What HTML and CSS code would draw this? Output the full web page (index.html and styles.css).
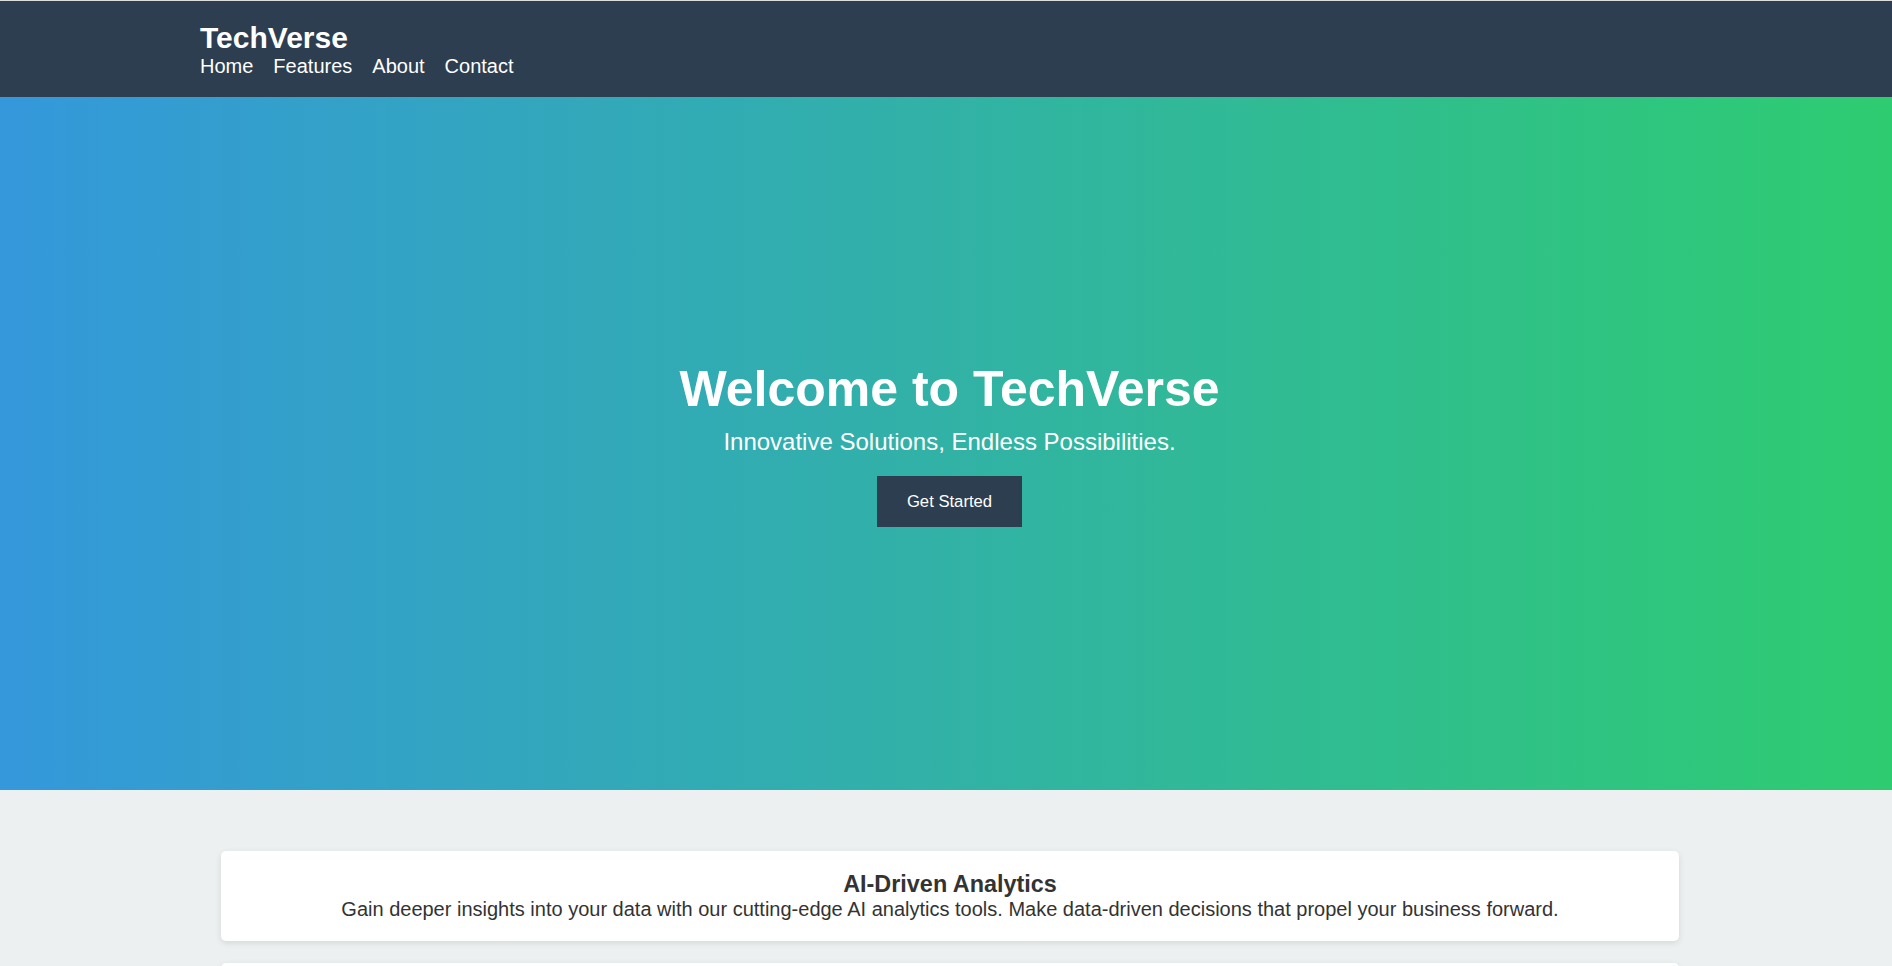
FILE: index.html
```html
<!DOCTYPE html>
<html lang="en">
<head>
<meta charset="utf-8">
<title>TechVerse</title>
<link rel="stylesheet" href="styles.css">
</head>
<body>
<header class="site-header">
  <div class="logo">TechVerse</div>
  <nav class="main-nav">
    <a href="#home">Home</a>
    <a href="#features">Features</a>
    <a href="#about">About</a>
    <a href="#contact">Contact</a>
  </nav>
</header>
<section class="hero" id="home">
  <h1 class="hero-title">Welcome to TechVerse</h1>
  <p class="hero-sub">Innovative Solutions, Endless Possibilities.</p>
  <button class="hero-btn">Get Started</button>
</section>
<section class="features" id="features">
  <div class="card">
    <h3 class="card-title">AI-Driven Analytics</h3>
    <p class="card-text">Gain deeper insights into your data with our cutting-edge AI analytics tools. Make data-driven decisions that propel your business forward.</p>
  </div>
  <div class="card">
    <h3 class="card-title">Cloud Integration</h3>
    <p class="card-text">Seamlessly connect your systems with scalable, secure cloud infrastructure built for growth.</p>
  </div>
</section>
</body>
</html>
```
FILE: styles.css
```css
html, body {
  margin: 0;
  padding: 0;
}
body {
  background: #ecf0f1;
  font-family: "Liberation Sans", Arial, sans-serif;
  color: #333;
}
.site-header {
  background: #2c3e50;
  color: #fff;
  border-top: 1px solid #dcdcdc;
  padding: 20px 200px 19px;
}
.logo {
  font-size: 30px;
  font-weight: bold;
  line-height: normal;
}
.main-nav {
  display: flex;
  gap: 20px;
  font-size: 20px;
  line-height: normal;
}
.main-nav a {
  color: #fff;
  text-decoration: none;
}
.hero {
  height: 693px;
  box-sizing: border-box;
  padding-left: 7px;
  background: linear-gradient(to right, #3498db, #2ecc71);
  color: #fff;
  display: flex;
  flex-direction: column;
  align-items: center;
  justify-content: center;
  text-align: center;
}
.hero-title {
  font-size: 50px;
  font-weight: bold;
  line-height: normal;
  margin: 0 0 10px;
}
.hero-sub {
  font-size: 24px;
  line-height: normal;
  margin: 0 0 20px;
}
.hero-btn {
  background: #2c3e50;
  color: #fff;
  border: none;
  font-family: "Liberation Sans", Arial, sans-serif;
  font-size: 16.67px;
  line-height: 19px;
  padding: 16px 30px;
  cursor: pointer;
}
.features {
  padding: 61px 213px 40px 221px;
  display: flex;
  flex-direction: column;
  gap: 22px;
}
.card {
  background: #fff;
  border-radius: 5px;
  box-shadow: 0 2px 6px rgba(0, 0, 0, 0.1);
  padding: 20px;
  text-align: center;
}
.card-title {
  font-size: 23.4px;
  font-weight: bold;
  line-height: normal;
  margin: 0;
  color: #333;
}
.card-text {
  font-size: 20px;
  line-height: normal;
  margin: 0;
  color: #333;
}
```
